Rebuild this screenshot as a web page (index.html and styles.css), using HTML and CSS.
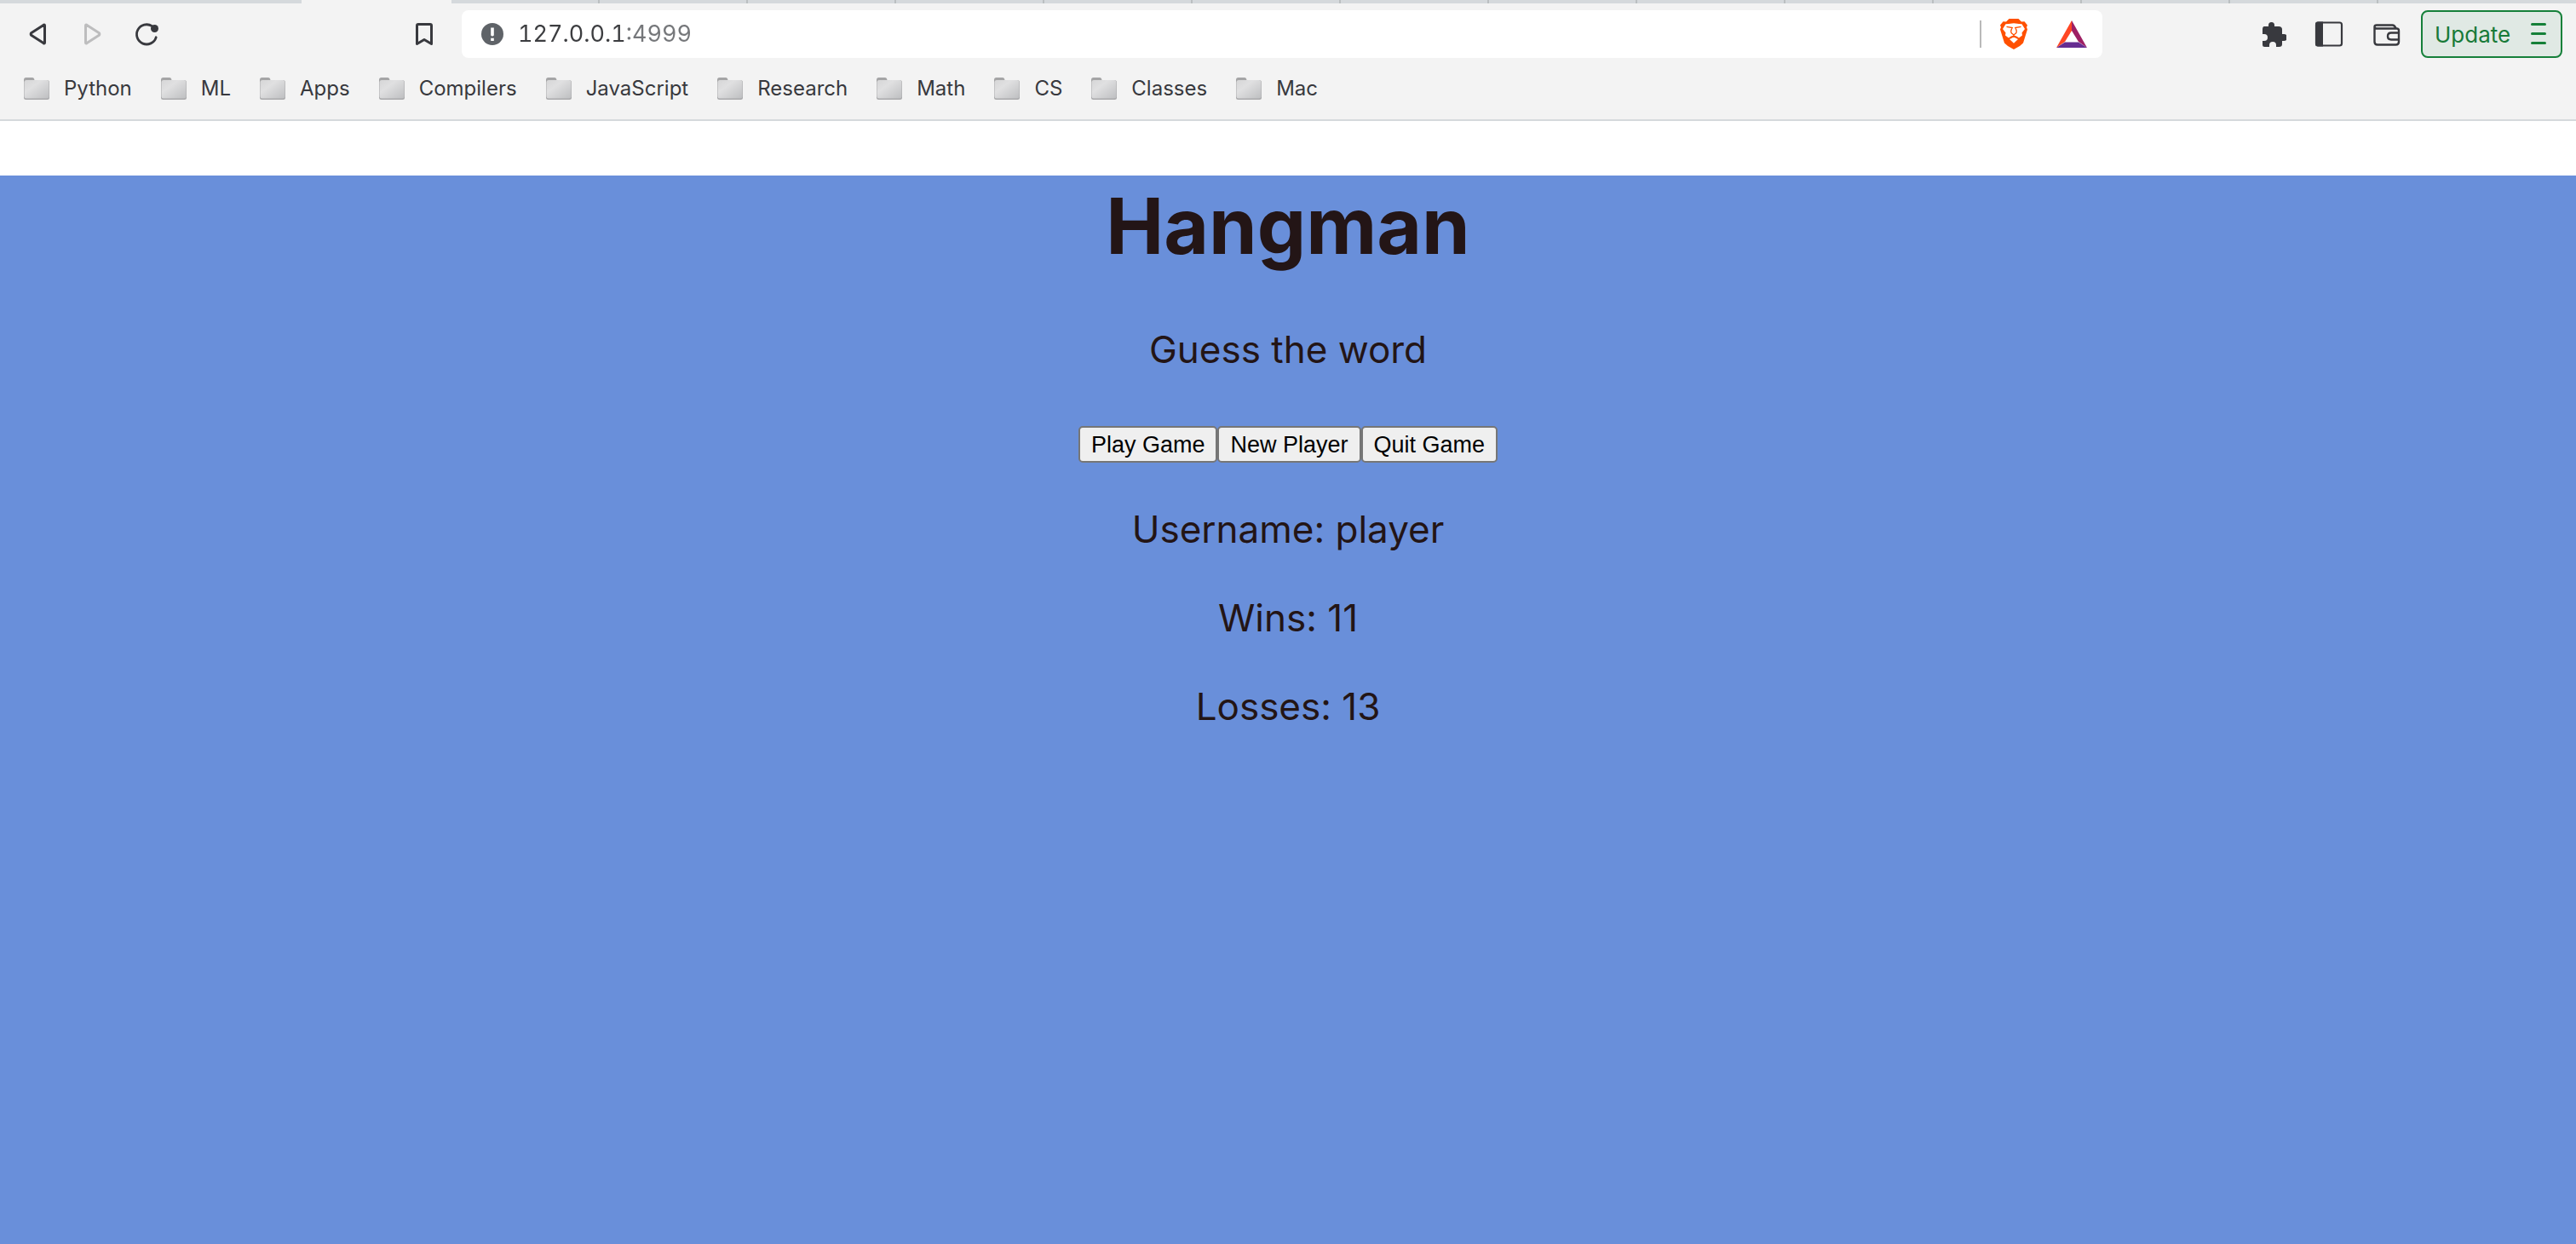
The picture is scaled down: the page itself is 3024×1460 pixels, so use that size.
FILE: index.html
```html
<!DOCTYPE html>
<html lang="en">
<head>
<meta charset="utf-8">
<title>Hangman</title>
<link rel="stylesheet" href="styles.css">
</head>
<body>
<svg class="defs" width="0" height="0" aria-hidden="true">
  <defs>
    <linearGradient id="folder-front" x1="0" y1="0" x2="1" y2="1">
      <stop offset="0" stop-color="#d6d6d7"/>
      <stop offset="0.35" stop-color="#e0e0e1"/>
      <stop offset="1" stop-color="#bebfc1"/>
    </linearGradient>
    <symbol id="folder" viewBox="0 0 30 26">
      <path d="M0 6V2.500Q0 0 2.500 0H10Q12 0 12.500 3H27Q30 3 30 6V10H0Z" fill="#a5a5a6"/>
      <rect x="0" y="4" width="30" height="22" rx="2.500" fill="#a9a9ab"/>
      <rect x="0.500" y="3" width="29" height="21.500" rx="2.500" fill="url(#folder-front)"/>
    </symbol>
  </defs>
</svg>

<header class="browser">
  <div class="tabs">
    <div class="tabs-before"></div>
    <div class="tab-active"></div>
    <div class="tab"></div><div class="tab"></div><div class="tab"></div><div class="tab"></div><div class="tab"></div>
    <div class="tab"></div><div class="tab"></div><div class="tab"></div><div class="tab"></div><div class="tab"></div>
    <div class="tab"></div><div class="tab"></div><div class="tab"></div>
    <div class="tabs-after"></div>
  </div>

  <div class="toolbar">
    <div class="nav">
      <button class="tool" aria-label="Back">
        <svg width="32" height="32" viewBox="0 0 32 32"><path d="M24.500 6V26Q24.500 27.500 23 26.600L9 17.600Q7.300 16 9 14.400L23 5.400Q24.500 4.500 24.500 6Z" fill="none" stroke="#38393e" stroke-width="3" stroke-linejoin="round"/></svg>
      </button>
      <button class="tool" aria-label="Forward">
        <svg width="32" height="32" viewBox="0 0 32 32"><path d="M8.500 6V26Q8.500 27.500 10 26.600L24 17.600Q25.700 16 24 14.400L10 5.400Q8.500 4.500 8.500 6Z" fill="none" stroke="#bdbdbe" stroke-width="3" stroke-linejoin="round"/></svg>
      </button>
      <button class="tool" aria-label="Reload">
        <svg width="32" height="32" viewBox="0 0 32 32"><path d="M22.500 6.700A11.600 11.600 0 1 0 27.200 19.800" fill="none" stroke="#38393e" stroke-width="2.800" stroke-linecap="round"/><circle cx="25.500" cy="9.500" r="4.500" fill="#38393e"/></svg>
      </button>
      <button class="tool tool-bookmark" aria-label="Bookmark this page">
        <svg width="32" height="32" viewBox="0 0 32 32"><path d="M7.500 6Q7.500 4.500 9 4.500H23Q24.500 4.500 24.500 6V27.500L16 22.500L7.500 27.500Z" fill="none" stroke="#38393e" stroke-width="3" stroke-linejoin="round"/></svg>
      </button>
    </div>

    <div class="address">
      <svg width="32" height="32" viewBox="0 0 32 32"><circle cx="16" cy="16" r="13" fill="#5f6368"/><path d="M14.200 8.500H17.800V17.500Q16 19.500 14.200 17.500Z M14.200 20.800H17.800V24H14.200Z" fill="#fff"/></svg>
      <input class="url" type="text" value="127.0.0.1:4999" aria-label="Address">
      <span class="divider"></span>
      <button class="shield" aria-label="Brave Shields">
        <svg width="36" height="36" viewBox="0 0 36 36">
          <path d="M12.500 0H23.500L27 3.500L30.500 3.200L34 7.500L33 10L34 12.500L29 28.500L25 32L18 36L11 32L7 28.500L2 12.500L3 10L2 7.500L5.500 3.200L9 3.500Z" fill="#ff5000"/>
          <path d="M12 6L18 5.200L24 6L27.500 6.200L31 12L27.500 16.500L28 19.500L24 22.500L21.500 20.800L18 19.500L14.500 20.800L12 22.500L8 19.500L8.500 16.500L5 12L8.500 6.200Z" fill="#fff"/>
          <path d="M18 21.500L23 24L18 28.800L13 24Z" fill="#fff"/>
          <path d="M9.500 9.300L16.200 10.500L15.500 12Q14 15 15.500 17L18 19L20.500 17Q22 15 20.500 12L19.800 10.500L26.500 9.300M18 18V22M18 20L13.500 22.500M18 20L22.500 22.500" fill="none" stroke="#ff5000" stroke-width="1.300"/>
        </svg>
      </button>
      <button class="rewards" aria-label="Brave Rewards">
        <svg width="36" height="36" viewBox="0 0 36 36">
          <path d="M18 2V14L10 27L0 34Z" fill="#ff4724"/>
          <path d="M18 2L36 34L26 27L18 14Z" fill="#9e1f63"/>
          <path d="M0 34L10 27.500H26L36 34Z" fill="#662d91"/>
        </svg>
      </button>
    </div>

    <div class="actions">
      <button class="action" aria-label="Extensions">
        <svg width="36" height="36" viewBox="0 0 36 36"><path d="M10 9H15V7.500A3.500 3.500 0 0 1 22 7.500V9H27Q31 9 31 12.500V18H33A3.500 3.500 0 0 1 33 26H31V30Q31 33 27.500 33H24V31A3.500 3.500 0 0 0 16 31V33H10.500Q8 33 8 30.500V26H10A4 4 0 0 0 10 18H8V12.500Q8 9 10 9Z" fill="#38393e"/></svg>
      </button>
      <button class="action" aria-label="Sidebar">
        <svg width="36" height="36" viewBox="0 0 36 36"><rect x="3" y="4.500" width="30" height="27" rx="2.500" fill="none" stroke="#38393e" stroke-width="2.200"/><path d="M4.500 3.500H11V32.500H4.500Q2 32.500 2 30V6Q2 3.500 4.500 3.500Z" fill="#38393e"/></svg>
      </button>
      <button class="action" aria-label="Wallet">
        <svg width="36" height="36" viewBox="0 0 36 36" fill="none" stroke="#38393e" stroke-width="2.400" stroke-linejoin="round"><path d="M3.500 10V27Q3.500 30.500 7 30.500H28.500Q32 30.500 32 27V14Q32 11.500 29.500 11.500H6Q3.500 11.500 3.500 9.500Q3.500 7.500 6 7.500H24.500Q27 7.500 28.500 11"/><path d="M32 16.500H23Q19 16.500 19 20.500Q19 24.500 23 24.500H32"/></svg>
      </button>
      <button class="update">Update
        <svg width="18" height="28" viewBox="0 0 18 28"><path d="M1.500 2.500H16.500M1.500 13.500H16.500M1.500 24.500H16.500" stroke="#158038" stroke-width="3" stroke-linecap="round"/></svg>
      </button>
    </div>
  </div>

  <nav class="bookmarks" aria-label="Bookmarks">
    <a class="bookmark" href="#"><svg width="30" height="26"><use href="#folder"/></svg>Python</a>
    <a class="bookmark" href="#"><svg width="30" height="26"><use href="#folder"/></svg>ML</a>
    <a class="bookmark" href="#"><svg width="30" height="26"><use href="#folder"/></svg>Apps</a>
    <a class="bookmark" href="#"><svg width="30" height="26"><use href="#folder"/></svg>Compilers</a>
    <a class="bookmark" href="#"><svg width="30" height="26"><use href="#folder"/></svg>JavaScript</a>
    <a class="bookmark" href="#"><svg width="30" height="26"><use href="#folder"/></svg>Research</a>
    <a class="bookmark" href="#"><svg width="30" height="26"><use href="#folder"/></svg>Math</a>
    <a class="bookmark" href="#"><svg width="30" height="26"><use href="#folder"/></svg>CS</a>
    <a class="bookmark" href="#"><svg width="30" height="26"><use href="#folder"/></svg>Classes</a>
    <a class="bookmark" href="#"><svg width="30" height="26"><use href="#folder"/></svg>Mac</a>
  </nav>
</header>

<main class="game">
  <h1 class="title">Hangman</h1>
  <p class="line">Guess the word</p>
  <div class="choices">
    <button class="choice">Play Game</button>
    <button class="choice">New Player</button>
    <button class="choice">Quit Game</button>
  </div>
  <p class="line">Username: player</p>
  <p class="line">Wins: 11</p>
  <p class="line">Losses: 13</p>
</main>
</body>
</html>
```
FILE: styles.css
```css
* {
  box-sizing: border-box;
}

body {
  display: flex;
  flex-direction: column;
  min-height: 100vh;
  margin: 0;
  background: #fff;
  font-family: Inter, "Liberation Sans", sans-serif;
}

button {
  font: inherit;
}

.defs {
  position: absolute;
}

.browser {
  background: #f3f3f3;
  border-bottom: 2px solid #d5d9dc;
}

/* Lower edge of the tab strip */
.tabs {
  display: flex;
  height: 4px;
}

.tabs-before {
  width: 354px;
  background: #d5d9dc;
}

.tab-active {
  width: 176px;
}

.tab {
  width: 174px;
  background: #d5d9dc;
  border-right: 2px solid #bbbfc1;
}

.tabs-after {
  flex: 1;
  background: #d5d9dc;
}

.toolbar {
  display: flex;
  align-items: center;
  gap: 12px;
  padding: 8px 16px 8px 12px;
}

.nav {
  display: flex;
  width: 518px;
}

.tool,
.action,
.shield,
.rewards {
  display: flex;
  align-items: center;
  justify-content: center;
  height: 56px;
  padding: 0;
  border: 0;
  background: none;
}

.tool {
  width: 64px;
}

.tool-bookmark {
  margin-left: auto;
}

.address {
  display: flex;
  flex: 1;
  align-items: center;
  height: 56px;
  padding: 0 18px 0 20px;
  border-radius: 8px;
  background: #fff;
}

/* Host in dark grey, port in a lighter one */
.url {
  flex: 1;
  min-width: 0;
  margin-left: 14px;
  padding: 0;
  border: 0;
  outline: 0;
  background: linear-gradient(90deg, #3c3d40 124px, #75777a 124px);
  background-clip: text;
  color: transparent;
  font: 27px/36px Inter, "Liberation Sans", sans-serif;
  font-variant-numeric: tabular-nums;
}

.divider {
  width: 2px;
  height: 32px;
  margin-right: 20px;
  background: #b9b9b9;
}

.rewards {
  margin-left: 32px;
}

.actions {
  display: flex;
  align-items: center;
  margin-left: 152px;
}

.action {
  width: 68px;
}

.update {
  display: flex;
  align-items: center;
  justify-content: space-between;
  width: 166px;
  height: 56px;
  margin-left: 6px;
  padding: 0 17px 0 14px;
  border: 2px solid #15803a;
  border-radius: 8px;
  background: #e0e9e4;
  color: #187a38;
  font-size: 26px;
}

.bookmarks {
  display: flex;
  gap: 34px;
  padding: 12px 28px 20px;
}

.bookmark {
  display: flex;
  align-items: center;
  gap: 17px;
  color: #38393e;
  font-size: 24px;
  line-height: 32px;
  text-decoration: none;
}

.game {
  display: flex;
  flex: 1;
  flex-direction: column;
  align-items: center;
  margin-top: 64px;
  background: #698fda;
  color: #231516;
}

.title {
  margin: 0 0 10px;
  font-size: 91px;
  font-weight: 700;
  line-height: 118px;
}

.line {
  margin: 48px 0 0;
  font-size: 44px;
  line-height: 56px;
}

.choices {
  display: flex;
  margin: 62px 0 2px;
}

.choice {
  height: 43px;
  padding: 0 13px;
  border: 2px solid #767676;
  border-radius: 5px;
  background: #efefef;
  color: #000;
  font: 27px/36px "Liberation Sans", Arial, sans-serif;
}
```
